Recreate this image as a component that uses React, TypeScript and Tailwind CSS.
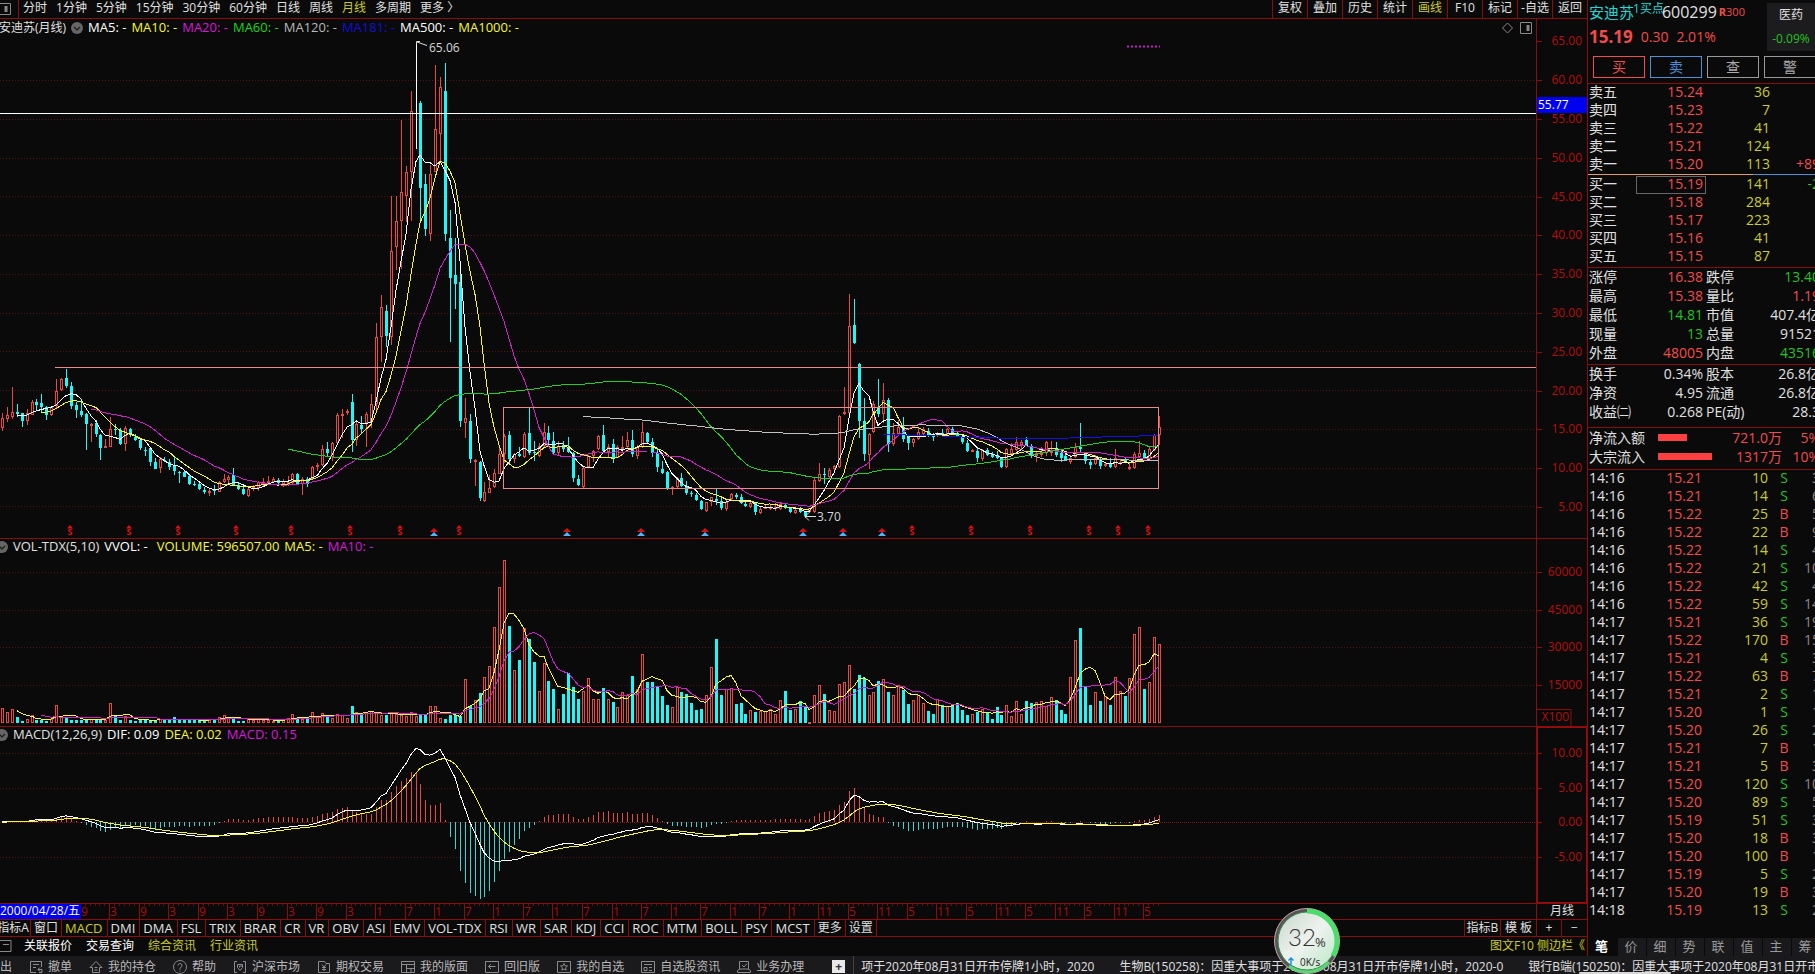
import type { ReactNode } from 'react'
import { clsx } from 'clsx'

const STEP = 4.9234
const UP = '#e84a42'
const DOWN = '#1afafa'

// kind, then high / body top / body bottom / low as chart rows
const CANDLES = `
r413,418,428,431 r407,415,419,422 r387,412,417,419 c404,412,414,417 c413,413,421,427 r409,413,421,425 r400,402,415,415 c399,402,405,410
c394,403,407,412 c406,407,415,420 r406,407,415,416 r379,391,406,408 r378,379,390,391 c369,378,386,388 c382,386,406,409 c402,405,410,418
c400,411,415,417 c413,414,424,450 r423,424,425,442 c420,423,434,437 c434,435,448,460 r439,446,448,448 r417,429,447,447 c424,429,430,435
c428,430,444,445 r426,428,444,451 c428,429,435,437 c434,437,440,441 c439,440,448,450 c447,450,451,456 c447,448,462,466 c458,462,469,469
r457,459,468,473 c457,460,461,462 c459,462,467,470 c457,466,471,475 c471,472,473,483 c470,472,477,477 c475,476,484,485 c481,484,485,486
c483,484,489,490 c487,490,492,494 r489,491,493,496 c485,490,491,495 r481,482,492,492 r474,479,482,483 r475,477,480,483 c468,475,485,486
c483,485,489,490 c487,489,494,495 r487,489,496,497 r485,487,488,491 r481,482,488,491 r478,482,483,486 r476,481,482,483 r477,479,482,482
c478,480,483,485 r479,481,484,487 r476,482,484,486 r473,474,483,484 c473,474,484,485 r477,479,484,495 c477,479,484,487 r466,467,479,480
r463,465,467,471 r445,449,465,466 c442,449,453,456 r442,443,457,461 r413,415,443,445 r409,414,415,438 r409,411,413,415 c394,402,440,452
r422,424,440,446 c416,425,429,434 r412,414,423,447 r394,404,422,428 r323,337,404,412 r295,307,337,362 c305,311,336,347 r196,251,337,345
r196,221,247,270 r120,192,221,269 r166,172,196,222 r91,111,172,221 w42,111,112,149 c101,103,188,221 c174,184,229,236 r165,174,234,241
r65,129,172,172 r77,87,134,163 c63,91,234,241 c210,238,278,342 c238,275,284,309 c268,282,421,427 r398,418,423,438 c414,421,459,463
r459,460,462,486 c461,462,498,501 r482,492,501,502 r475,488,493,493 r469,473,487,488 r448,454,474,474 r434,436,454,463 c431,435,459,464
r453,454,459,463 c447,454,456,457 r432,434,457,458 c408,433,453,455 c441,452,453,461 r443,446,456,457 r423,432,446,447 c426,433,440,445
c432,441,453,454 r441,446,453,455 c441,445,449,452 c437,447,452,453 c452,453,478,482 c475,479,485,486 r467,468,487,488 r455,456,467,468
r450,451,456,462 r435,436,449,450 c425,435,451,453 r444,447,452,458 c439,444,459,463 r445,447,458,458 r436,447,449,452 r432,440,447,448
c430,440,454,457 r445,447,456,459 r422,432,447,448 c432,433,442,443 c438,442,453,457 c449,453,467,472 c461,469,473,474 c471,472,488,490
r486,487,488,495 r477,478,487,488 c473,478,486,487 c481,487,493,495 c491,493,494,497 c493,495,500,501 c500,501,509,510 r502,502,511,512
r497,497,502,506 c489,499,501,505 c497,501,508,510 r499,502,509,511 r493,494,499,500 c493,495,497,499 c494,497,503,504 c502,504,506,507
r502,503,507,508 c502,503,512,515 r507,509,513,514 r504,507,508,509 r504,507,508,510 r503,507,509,511 r503,504,509,510 c503,505,508,509
c507,508,512,513 r508,510,513,514 c507,509,512,513 c511,512,516,518 r508,508,512,513 r477,480,512,513 r463,474,481,482 c468,474,475,484
r468,470,477,479 r465,466,469,471 r415,416,467,468 r387,412,414,415 r294,326,413,414 c299,325,343,344 c363,364,421,438 c398,421,454,461
r433,434,455,469 r401,404,432,433 c379,408,414,417 r383,400,414,423 c398,400,444,452 r423,433,444,446 r420,427,434,435 c417,427,439,442
c435,437,443,450 r438,439,443,447 r428,432,439,440 r427,429,434,435 c428,431,436,437 c433,435,437,441 r432,433,436,437 c429,433,435,436
r428,429,434,435 c427,429,433,434 c432,433,436,437 c435,437,442,444 c440,443,451,452 r449,450,451,452 c448,451,458,462 r449,450,459,461
c448,450,455,456 c452,454,457,458 c451,455,458,459 c457,458,467,468 r448,449,467,468 r443,449,454,455 r437,442,450,451 r440,442,445,450
c437,440,445,446 c444,446,456,458 r452,453,456,462 r447,452,455,457 r441,442,453,456 r441,450,453,456 c442,448,455,457 c450,453,458,462
c454,456,460,461 r455,458,462,464 r443,447,457,458 c423,447,449,452 c452,453,461,464 c460,462,465,469 r455,458,464,465 c457,460,466,469
r462,464,466,467 c458,464,467,468 r449,458,467,468 r459,462,464,465 c457,460,462,463 r463,467,469,470 r452,454,468,469 r441,453,457,458
c450,453,458,459 r447,449,459,460 r434,435,450,451 r416,427,435,445`
  .trim()
  .split(/\s+/)
  .map((s) => {
    const [high, top, bottom, low] = s.slice(1).split(',').map(Number)
    return { kind: s[0], high, top, bottom, low, close: s[0] === 'c' ? bottom : top }
  })

const VOLUMES = [
  15, 11, 14, 6, 2, 4, 8, 3, 3, 2, 4, 18, 7, 5, 3, 3, 3, 4, 4, 3, 4, 3, 20, 8, 3, 7, 3, 2, 3, 3, 3, 3, 4, 3, 3, 6, 3, 3, 3, 3,
  3, 3, 3, 4, 6, 8, 6, 5, 2, 2, 5, 3, 4, 3, 3, 2, 2, 4, 5, 9, 5, 4, 5, 11, 6, 10, 8, 5, 9, 8, 5, 17, 11, 8, 11, 12, 11, 8, 8, 10,
  9, 8, 7, 11, 7, 8, 8, 17, 17, 5, 4, 8, 8, 7, 44, 17, 23, 30, 46, 57, 96, 136, 163, 97, 53, 63, 95, 84, 61, 32, 60, 42, 34, 14, 29, 50, 36, 24, 32, 45,
  24, 24, 35, 24, 21, 16, 31, 28, 47, 34, 69, 41, 41, 36, 27, 18, 16, 36, 31, 29, 20, 13, 14, 28, 56, 84, 28, 34, 35, 19, 20, 9, 13, 11, 12, 12, 14, 9, 23, 32,
  13, 14, 22, 16, 1, 28, 38, 29, 13, 12, 39, 41, 58, 34, 48, 45, 28, 31, 42, 44, 31, 28, 38, 33, 19, 23, 28, 20, 12, 9, 24, 18, 17, 18, 20, 13, 8, 9, 11, 14,
  11, 4, 16, 8, 18, 7, 22, 9, 22, 20, 21, 22, 17, 26, 23, 13, 9, 46, 83, 95, 36, 18, 31, 22, 27, 18, 46, 32, 27, 45, 89, 96, 34, 41, 86, 79,
]

const xAt = (i: number) => Math.round(2 + STEP * i)

// one more candle sits just left of the visible range
function average(visible: number[], n: number) {
  const values = [visible[0], ...visible]
  const points: [number, number][] = []
  for (let i = n - 1; i < values.length; i++) {
    let sum = 0
    for (let j = i - n + 1; j <= i; j++) sum += values[j]
    points.push([xAt(i - 1), sum / n])
  }
  return points
}

function ema(values: number[], n: number) {
  const out = [values[0]]
  for (let i = 1; i < values.length; i++) out.push((out[i - 1] * (n - 1) + values[i] * 2) / (n + 1))
  return out
}

const CLOSES = CANDLES.map((c) => c.close)
const PRICES = CLOSES.map((y) => 60 - (y - 80.2) / 7.766)
const FAST = ema(PRICES, 12)
const SLOW = ema(PRICES, 26)
const DIF = FAST.map((v, i) => v - SLOW[i])
const DEA = ema(DIF, 9)

const toPoints = (points: [number, number][]) => points.map(([x, y]) => `${x},${y.toFixed(1)}`).join(' ')

function Line({ points, color }: { points: [number, number][]; color: string }) {
  return <polyline points={toPoints(points)} fill="none" stroke={color} strokeWidth={1} shapeRendering="crispEdges" />
}

function Grid({ rows }: { rows: number[] }) {
  return (
    <>
      {rows.map((y) => (
        <line key={y} x1={0} x2="100%" y1={y + 0.5} y2={y + 0.5} stroke="#521414" strokeDasharray="1 2" />
      ))}
    </>
  )
}

const DIVIDENDS = [70, 129, 178, 236, 291, 350, 400, 459, 912, 971, 1030, 1089, 1118, 1148]
const EVENTS = [434, 567, 641, 705, 803, 843, 882]

function PriceChart() {
  return (
    <svg className="block w-full h-[500px]" aria-label="月线">
      <g transform="translate(0 -38)">
        <Grid rows={[80, 119, 158, 196, 235, 274, 313, 351, 390, 429, 468, 506]} />
        <line x1={1127} x2={1160} y1={46.5} y2={46.5} stroke="#c020c0" strokeWidth={2} strokeDasharray="2 2" />
        <g shapeRendering="crispEdges">
          {CANDLES.map((c, i) => {
            const x = xAt(i)
            if (c.kind === 'w') return <rect key={i} x={x} y={c.high} width={1} height={c.low - c.high} fill="#fff" />
            if (c.kind === 'c')
              return (
                <g key={i} fill={DOWN}>
                  <rect x={x} y={c.high} width={1} height={c.low - c.high} />
                  <rect x={x - 1} y={c.top} width={3} height={Math.max(c.bottom - c.top, 1)} />
                </g>
              )
            return (
              <g key={i} stroke={UP} fill="none">
                <path d={`M${x + 0.5} ${c.high}V${c.top}M${x + 0.5} ${c.bottom}V${c.low}`} />
                <rect x={x - 0.5} y={c.top + 0.5} width={2} height={Math.max(c.bottom - c.top - 1, 1)} />
              </g>
            )
          })}
        </g>
        <Line points={average(CLOSES, 5)} color="#ffffff" />
        <Line points={average(CLOSES, 10)} color="#f8f828" />
        <Line points={average(CLOSES, 20)} color="#d020d0" />
        <Line points={average(CLOSES, 60)} color="#20d020" />
        <Line points={average(CLOSES, 120)} color="#c0c0c0" />
        <Line points={average(CLOSES, 181)} color="#1414e0" />
        <g stroke="#f08888" fill="none">
          <line x1={55} x2="100%" y1={367.5} y2={367.5} />
          <rect x={503.5} y={407.5} width={655} height={81} />
        </g>
        <line x1={0} x2="100%" y1={113.5} y2={113.5} stroke="#fff" />
        <path d="M427 45.5L417 42M420 41.5H416.5V45" stroke="#ddd" fill="none" />
        <path d="M816 516.5H805M809 512.5L805 516.5L809 520.5" stroke="#ddd" fill="none" />
        <g fill="#d8d8d8" fontSize={12}>
          <text x={429} y={52}>65.06</text>
          <text x={817} y={521}>3.70</text>
        </g>
        {DIVIDENDS.map((x) => (
          <g key={x} fill="#e01010">
            <path d={`M${x} 525l3 3.500h-6z`} />
            <text x={x} y={535} fontSize={9} fontWeight={700} textAnchor="middle">S</text>
          </g>
        ))}
        {EVENTS.map((x) => (
          <g key={x}>
            <path d={`M${x} 528l4 4h-8z`} fill="#e01010" />
            <path d={`M${x} 532l4 4h-8z`} fill="#50b4ff" />
          </g>
        ))}
      </g>
    </svg>
  )
}

function VolumeChart() {
  const tops = VOLUMES.map((v) => 723 - v)
  return (
    <svg className="block w-full h-[170px]" aria-label="成交量">
      <g transform="translate(0 -556)">
        <Grid rows={[572, 610, 647, 685]} />
        <g shapeRendering="crispEdges">
          {VOLUMES.map((v, i) =>
            CANDLES[i]?.kind === 'c' ? (
              <rect key={i} x={xAt(i) - 1} y={723 - v} width={3} height={v} fill={DOWN} />
            ) : (
              <rect key={i} x={xAt(i) - 0.5} y={723.5 - v} width={2} height={Math.max(v - 1, 1)} fill="none" stroke={UP} />
            ),
          )}
        </g>
        <Line points={average(tops, 5)} color="#f8f828" />
        <Line points={average(tops, 10)} color="#d020d0" />
      </g>
    </svg>
  )
}

function MacdChart() {
  const row = (v: number) => 822 - v * 6.9
  return (
    <svg className="block w-full h-[159px]" aria-label="MACD">
      <g transform="translate(0 -744)">
        <Grid rows={[753, 788, 857]} />
        <line x1={0} x2="100%" y1={822.5} y2={822.5} stroke="#7a1616" strokeDasharray="1 1" />
        <g shapeRendering="crispEdges">
          {DIF.map((v, i) => {
            const h = (v - DEA[i]) * 2 * 6.9
            return (
              <rect key={i} x={xAt(i)} y={h > 0 ? 822 - h : 822} width={1} height={Math.abs(h)} fill={h > 0 ? UP : '#30d8d8'} />
            )
          })}
        </g>
        <Line points={DIF.map((v, i) => [xAt(i), row(v)])} color="#ffffff" />
        <Line points={DEA.map((v, i) => [xAt(i), row(v)])} color="#f8f828" />
      </g>
    </svg>
  )
}

function Scale({ labels, origin, children }: { labels: [string, number][]; origin: number; children?: ReactNode }) {
  return (
    <svg className="block size-full">
      <g transform={`translate(0 ${-origin})`} fill="#b80c0c" fontSize={12} textAnchor="end">
        {labels.map(([label, y]) => (
          <g key={label}>
            <line x1={0} x2={5} y1={y + 0.5} y2={y + 0.5} stroke="#8a0c0c" />
            <text x={45} y={y + 4}>{label}</text>
          </g>
        ))}
        {children}
      </g>
    </svg>
  )
}

const PRICE_LABELS = Array.from({ length: 13 }, (_, i): [string, number] => [`${65 - i * 5}.00`, Math.round(41.4 + i * 38.8)])

function Collapse() {
  return (
    <svg className="size-3 shrink-0" viewBox="0 0 12 12">
      <circle cx={6} cy={6} r={6} fill="#666" />
      <path d="M3 5l3 3 3-3" stroke="#222" strokeWidth={1.5} fill="none" />
    </svg>
  )
}

function Panel({ legend, chart, scale, className }: { legend: ReactNode; chart: ReactNode; scale: ReactNode; className: string }) {
  return (
    <section className="flex border-b border-[#8a0c0c]">
      <div className="flex-1 min-w-0">
        <div className={clsx('flex items-center gap-[5px] pb-0.5 text-[13px] whitespace-nowrap', className)}>{legend}</div>
        {chart}
      </div>
      <div className="w-[51px] shrink-0 border-l border-[#8a0c0c]">{scale}</div>
    </section>
  )
}

const PERIODS = ['分时', '1分钟', '5分钟', '15分钟', '30分钟', '60分钟', '日线', '周线', '月线', '多周期', '更多 〉']
const TOOLS = ['复权', '叠加', '历史', '统计', '画线', 'F10', '标记', '-自选', '返回']

function TopBar() {
  return (
    <header className="flex h-[19px] border-b border-[#8a0c0c] whitespace-nowrap">
      <div className="w-[19px] border-r border-[#8a0c0c] flex items-center">
        <svg className="size-3" viewBox="0 0 12 12" fill="none" stroke="#888">
          <path d="M0 .5h10.500v11H0" />
          <path d="M6 3v6" strokeWidth={3} />
        </svg>
      </div>
      <nav className="flex-1 flex items-center gap-[9px] pl-1 pb-0.5">
        {PERIODS.map((p) => (
          <button key={p} className={p === '月线' ? 'text-[#cccc22]' : ''}>{p}</button>
        ))}
      </nav>
      {TOOLS.map((t) => (
        <button key={t} className={clsx('w-[35px] pb-0.5 border-l border-[#8a0c0c]', t === '画线' && 'text-[#cccc22]')}>{t}</button>
      ))}
    </header>
  )
}

const DATE_LABELS = ['9', '3', '9', '3', '9', '3', '9', '3', '9', '3', '1', '7', '1', '7', '1', '7', '1', '7', '1', '7', '1', '7', '1', '7', '1', '11', '5', '11', '5', '11', '5', '11', '5', '11', '5', '11', '5']

function DateAxis() {
  return (
    <div className="flex h-4 border-b border-[#8a0c0c] leading-[14px]">
      <div className="w-[81px] shrink-0 bg-[#0000f0] text-white whitespace-nowrap overflow-hidden">2000/04/28/五</div>
      <svg className="flex-1 min-w-0 h-full">
        <g transform="translate(-81 0)">
          {CANDLES.map((_, i) => (
            <line key={i} x1={Math.round(i * STEP) + 1.5} x2={Math.round(i * STEP) + 1.5} y1={0} y2={2} stroke="#6a0c0c" />
          ))}
          {DATE_LABELS.map((label, k) => {
            const x = Math.round((16 + k * 6) * STEP) + 1
            return (
              <g key={k}>
                <line x1={x + 0.5} x2={x + 0.5} y1={0} y2={15} stroke="#8a0c0c" />
                <text x={x + 1} y={12} fontSize={12} fill="#a80c0c">{label}</text>
              </g>
            )
          })}
        </g>
      </svg>
      <div className="w-[51px] shrink-0 border-l border-[#8a0c0c] text-center">月线</div>
    </div>
  )
}

const INDICATORS = ['MACD', 'DMI', 'DMA', 'FSL', 'TRIX', 'BRAR', 'CR', 'VR', 'OBV', 'ASI', 'EMV', 'VOL-TDX', 'RSI', 'WR', 'SAR', 'KDJ', 'CCI', 'ROC', 'MTM', 'BOLL', 'PSY', 'MCST']

function IndicatorTabs() {
  return (
    <div className="flex h-[17px] border-b border-[#8a0c0c] whitespace-nowrap leading-4">
      <button className="w-[31px] border-r border-[#8a0c0c]"><span className="-ml-1">指标A</span></button>
      <button className="px-[3px] border-r border-[#8a0c0c]">窗口</button>
      {INDICATORS.map((name) => (
        <button key={name} className={clsx('pl-[3px] pr-1 text-[13px] border-r border-[#8a0c0c]', name === 'MACD' && 'text-[#cccc22]')}>{name}</button>
      ))}
      <button className="px-[3px] border-r border-[#8a0c0c]">更多</button>
      <button className="px-[3px] border-r border-[#8a0c0c]">设置</button>
      <button className="ml-auto w-9 border-l border-[#8a0c0c]">指标B</button>
      <button className="w-9 border-l border-[#8a0c0c]">模 板</button>
      <button className="w-[25px] border-l border-[#8a0c0c]">+</button>
      <button className="w-[26px] border-l border-[#8a0c0c]">−</button>
    </div>
  )
}

const ASKS = [['卖五', '15.24', '36', ''], ['卖四', '15.23', '7', ''], ['卖三', '15.22', '41', ''], ['卖二', '15.21', '124', ''], ['卖一', '15.20', '113', '+89']]
const BIDS = [['买一', '15.19', '141', '-2'], ['买二', '15.18', '284', ''], ['买三', '15.17', '223', ''], ['买四', '15.16', '41', ''], ['买五', '15.15', '87', '']]

const RED = 'text-[#f34a4a]'
const GREEN = 'text-[#22c322]'
const YELLOW = 'text-[#cccc22]'
const TABLE = 'w-[232px] table-fixed text-right whitespace-nowrap [&_td]:pb-0.5'

function Book({ rows }: { rows: string[][] }) {
  return (
    <table className={TABLE}>
      <colgroup>
        <col className="w-[48px]" />
        <col className="w-[70px]" />
        <col className="w-[64px]" />
        <col />
      </colgroup>
      <tbody>
        {rows.map(([label, price, volume, change]) => (
          <tr key={label} className="h-[18px]">
            <td className="pl-px text-left">{label}</td>
            <td className={clsx('pr-[3px]', RED, label === '买一' && 'outline outline-[#666] -outline-offset-1')}>{price}</td>
            <td className={YELLOW}>{volume}</td>
            <td className={change[0] === '-' ? GREEN : RED}>{change}</td>
          </tr>
        ))}
      </tbody>
    </table>
  )
}

const STATS = [
  ['涨停', '16.38', RED, '跌停', '13.40', GREEN],
  ['最高', '15.38', RED, '量比', '1.19', RED],
  ['最低', '14.81', GREEN, '市值', '407.4亿', ''],
  ['现量', '13', GREEN, '总量', '91521', ''],
  ['外盘', '48005', RED, '内盘', '43516', GREEN],
]
const RATIOS = [
  ['换手', '0.34%', '', '股本', '26.8亿', ''],
  ['净资', '4.95', '', '流通', '26.8亿', ''],
  ['收益㈡', '0.268', '', 'PE(动)', '28.3', ''],
]

function Stats({ rows }: { rows: string[][] }) {
  return (
    <table className={TABLE}>
      <colgroup>
        <col className="w-[48px]" />
        <col className="w-[67px]" />
        <col className="w-[50px]" />
        <col />
      </colgroup>
      <tbody>
        {rows.map(([a, av, ac, b, bv, bc]) => (
          <tr key={a} className="h-[19px]">
            <td className="pl-px text-left">{a}</td>
            <td className={ac}>{av}</td>
            <td className="pl-[3px] text-left">{b}</td>
            <td className={bc}>{bv}</td>
          </tr>
        ))}
      </tbody>
    </table>
  )
}

const TICKS = `
14:16 15.21 10 S 3|14:16 15.21 14 S 6|14:16 15.22 25 B 5|14:16 15.22 22 B 9|14:16 15.22 14 S 4|14:16 15.22 21 S 10
14:16 15.22 42 S 4|14:16 15.22 59 S 14|14:17 15.21 36 S 19|14:17 15.22 170 B 15|14:17 15.21 4 S 3|14:17 15.22 63 B 7
14:17 15.21 2 S 1|14:17 15.20 1 S 1|14:17 15.20 26 S 2|14:17 15.21 7 B 1|14:17 15.21 5 B 3|14:17 15.20 120 S 10
14:17 15.20 89 S 5|14:17 15.19 51 S 3|14:17 15.20 18 B 3|14:17 15.20 100 B 1|14:17 15.19 5 S 2|14:17 15.20 19 B 3
14:18 15.19 13 S 2`
  .trim()
  .split(/[|\n]/)
  .map((s) => s.split(' '))

function Ticks() {
  return (
    <table className={TABLE}>
      <colgroup>
        <col className="w-[48px]" />
        <col className="w-[66px]" />
        <col className="w-[66px]" />
        <col className="w-[32px]" />
        <col />
      </colgroup>
      <tbody>
        {TICKS.map(([time, price, volume, side, count], i) => (
          <tr key={i} className="h-[18px]">
            <td className="pl-px text-left">{time}</td>
            <td className={RED}>{price}</td>
            <td className={YELLOW}>{volume}</td>
            <td className={clsx('text-center', side === 'S' ? GREEN : RED)}>{side}</td>
            <td className="text-[#888]">{count}</td>
          </tr>
        ))}
      </tbody>
    </table>
  )
}

const FLOWS = [
  { label: '净流入额', bar: 'w-[29px]', value: '721.0万', share: '5%' },
  { label: '大宗流入', bar: 'w-[54px]', value: '1317万', share: '10%' },
]
const SIDE_TABS = ['笔', '价', '细', '势', '联', '值', '主', '筹']

function Quote() {
  return (
    <aside className="w-[228px] shrink-0 overflow-hidden border-l border-[#8a0c0c] text-sm leading-4 flex flex-col">
      <div className="h-[83px] relative">
        <div className="flex h-6 items-center pl-px whitespace-nowrap">
          <span className="text-[15px] text-[#20d8d8]">安迪苏</span>
          <span className="text-xs text-[#20d8d8] self-start leading-[18px] -ml-px">1买点</span>
          <span className="text-base -ml-0.5">600299</span>
          <span className={clsx('text-[11px] ml-0.5', RED)}><b>R</b>300</span>
        </div>
        <div className={clsx('flex h-[25px] items-center gap-2 pl-px', RED)}>
          <b className="text-[17px]">15.19</b>
          <span>0.30</span>
          <span>2.01%</span>
        </div>
        <div className="flex gap-[5px] pl-[5px] pt-[7px]">
          <button className={clsx('w-[52px] h-[22px] shrink-0 border border-[#f34a4a]', RED)}>买</button>
          <button className="w-[52px] h-[22px] shrink-0 border border-[#4a90d9] text-[#4a90d9]">卖</button>
          <button className="w-[52px] h-[22px] shrink-0 border border-[#999] text-[#aaa]">查</button>
          <button className="w-[52px] h-[22px] shrink-0 border border-[#999] text-[#aaa]">警</button>
        </div>
        <div className="absolute top-[3px] right-0 w-[48px] h-12 bg-[#1c1c1e] text-xs leading-6 text-center">
          <div>医药</div>
          <div className={GREEN}>-0.09%</div>
        </div>
      </div>
      <div className="border-t border-[#8a0c0c]">
        <Book rows={ASKS} />
      </div>
      <div className="flex h-px">
        <div className="w-[165px] bg-[#e0a050]" />
        <div className="flex-1 bg-[#4a90d9]" />
      </div>
      <div className="pt-px pb-px">
        <Book rows={BIDS} />
      </div>
      <div className="border-t border-[#8a0c0c] pb-px">
        <Stats rows={STATS} />
      </div>
      <div className="border-t border-[#8a0c0c] pb-[5px]">
        <Stats rows={RATIOS} />
      </div>
      <div className="border-t border-[#8a0c0c] pb-[3px]">
        {FLOWS.map((f) => (
          <div key={f.label} className="flex items-center h-[19px] w-[232px] pl-px whitespace-nowrap">
            <span className="w-[69px]">{f.label}</span>
            <span className="w-[54px]"><span className={clsx('block h-[7px] bg-[#fa4040]', f.bar)} /></span>
            <span className={clsx('flex-1 text-right', RED)}>{f.value}</span>
            <span className={clsx('w-[38px] text-right', RED)}>{f.share}</span>
          </div>
        ))}
      </div>
      <div className="border-t border-[#8a0c0c]">
        <Ticks />
      </div>
      <div className="mt-auto flex h-[18px] text-[13px] text-[#999]">
        {SIDE_TABS.map((t) => (
          <button key={t} className={clsx('w-[29px] shrink-0 pr-0.5 pb-0.5', t === '笔' ? 'text-white font-bold' : 'bg-[#1a1a1c] border-l border-[#0a0a0a]')}>{t}</button>
        ))}
      </div>
    </aside>
  )
}

const SHORTCUTS = [
  { label: '撤单', d: 'M12.500 7V1.500h-11v11H7M4 4.500h6M4 7.500h3M9 9.500h4M9 9.500l2-2M9 9.500l2 2M13 9.500v3h-3' },
  { label: '我的持仓', d: 'M1 7.500L7 1.500l6 6H10.500v5h-7v-5zM5.500 7.500h3M5.500 10h3' },
  { label: '帮助', d: 'M7 .5a6.500 6.500 0 1 0 .01 0M5 5.500a2 2 0 1 1 2.500 2L7 8v1.500M7 10.500v1' },
  { label: '沪深市场', d: 'M4 1.500H1.500v11H4M10 1.500h2.500v11H10M4.500 4.500h5v3L7 10.500l-2.500-3zM9 6H6.500v1.500' },
  { label: '期权交易', d: 'M5 1.500H1.500v11h11v-9H9L7.500 1.500zM5 4.500l2 2.500 2-2.500M7 7v4M5 7.500h4M5 9.500h4' },
  { label: '我的版面', d: 'M.5 1.500h13v11H.5zM.5 4.500h13M5.500 4.500v8M5.500 8.500h8M10 8.500v4' },
  { label: '回旧版', d: 'M.5 1.500h13v11H.5zM3.500 6.500h7M6 4L3.500 6.500L6 9' },
  { label: '我的自选', d: 'M.5 1.500h13v11H.5zM7 3.500l1 2.300 2.500.2-1.900 1.700.6 2.500L7 9l-2.200 1.200.6-2.500L3.500 6l2.500-.2z' },
  { label: '自选股资讯', d: 'M.5 1.500h13v11H.5zM3 4.500h8M3 7.500h3v3H3zM8 7.500h3M8 10.500h3' },
  { label: '业务办理', d: 'M2.500 9V1.500h9V9M5 5l2 2 3-3.500M.5 12.500v-2L3 9h8l2.500 1.500v2z' },
]

function BottomBar() {
  return (
    <footer className="relative flex items-start h-[18px] bg-[#1a1a1c] overflow-hidden whitespace-nowrap leading-[22px]">
      <div className="flex shrink-0 items-center gap-[17px] text-[#b8b8b8]">
        <span>出</span>
        {SHORTCUTS.map((s) => (
          <button key={s.label} className="flex items-center gap-[5px]">
            <svg className="size-3.5" viewBox="0 0 14 14" fill="none" stroke="#8c8c8c">
              <path d={s.d} />
            </svg>
            {s.label}
          </button>
        ))}
      </div>
      <button className="ml-7 mt-1 shrink-0 size-[13px] bg-[#e8e8e8] text-[#333] leading-3 font-bold">+</button>
      <div className="ml-2 flex gap-[25px] border-l border-[#444] pl-[7px] text-[#e0e0e0]">
        <span>项于2020年08月31日开市停牌1小时，2020</span>
        <span>生物B(150258)：因重大事项于2020年08月31日开市停牌1小时，2020-0</span>
        <span>银行B端(150250)：因重大事项于2020年08月31日开市停牌1小时</span>
      </div>
      <div className="absolute right-36 bottom-0 w-[92px] h-[2px] rounded bg-[#d8d8d8]" />
    </footer>
  )
}

function NetBall() {
  return (
    <div className="absolute bottom-0 right-[475px] size-[66px]">
      <svg className="block size-full" viewBox="0 0 66 66">
        <defs>
          <linearGradient id="ball" x1="0" y1="0" x2="1" y2="1">
            <stop offset="0" stopColor="#c8d8cc" />
            <stop offset="0.5" stopColor="#eef2ee" />
            <stop offset="1" stopColor="#b8e8c4" />
          </linearGradient>
        </defs>
        <circle cx={33} cy={33} r={32.500} fill="#555" stroke="#c8a8a8" />
        <circle cx={33} cy={33} r={29} fill="url(#ball)" stroke="#3a8a50" />
        <path d="M33 3a30 30 0 0 1 26 45" fill="none" stroke="#4cdc6c" strokeWidth={5} />
        <path d="M55 54a30 30 0 0 1-40 4" fill="none" stroke="#58d874" strokeWidth={3} />
        <text x={14} y={38} fontFamily="Lato" fontSize={24} fontWeight={300} fill="#333">32</text>
        <text x={41} y={39} fontSize={13} fill="#333">%</text>
        <path d="M17 58v-8M14.500 52.500L17 50l2.500 2.500" fill="none" stroke="#2090f0" strokeWidth={1.500} />
        <text x={26} y={58} fontSize={10} fill="#222">0K/s</text>
      </svg>
    </div>
  )
}

export default function App() {
  return (
    <div className="relative min-h-screen overflow-hidden bg-[#0a0a0a] text-[#e0e0e0] text-xs font-['Open_Sans','Noto_Sans_CJK_SC',sans-serif]">
      <div className="flex">
        <main className="flex-1 min-w-0">
          <TopBar />
          <Panel
            className="h-[19px]"
            legend={
              <>
                <span className="-ml-px text-xs">安迪苏(月线)</span>
                <Collapse />
                <span className="text-white">MA5: -</span>
                <span className="text-[#f8f828]">MA10: -</span>
                <span className="text-[#d818d8]">MA20: -</span>
                <span className="text-[#18d818]">MA60: -</span>
                <span className="text-[#b8b8b8]">MA120: -</span>
                <span className="text-[#1010d8]">MA181: -</span>
                <span className="text-white">MA500: -</span>
                <span className="text-[#f8f828]">MA1000: -</span>
                <svg className="ml-auto mr-1 h-3 w-[30px]" viewBox="0 0 30 12" fill="none" stroke="#888">
                  <path d="M5.500 1L10.500 6l-5 5L.5 6zM18.500.5h11v11h-11z" />
                  <path d="M26 3v6" strokeWidth={3} />
                </svg>
              </>
            }
            chart={<PriceChart />}
            scale={
              <Scale labels={PRICE_LABELS} origin={19}>
                <rect x={0} y={97} width={50} height={16} fill="#0000f0" />
                <text x={1} y={109} fill="#fff" textAnchor="start">55.77</text>
              </Scale>
            }
          />
          <Panel
            className="h-[17px]"
            legend={
              <>
                <span className="-ml-1 flex"><Collapse /></span>
                <span>VOL-TDX(5,10)</span>
                <span className="text-white">VVOL: -</span>
                <span className="text-[#f8f828] ml-1">VOLUME: 596507.00</span>
                <span className="text-[#f8f828]">MA5: -</span>
                <span className="text-[#d818d8]">MA10: -</span>
              </>
            }
            chart={<VolumeChart />}
            scale={
              <Scale labels={[['60000', 572], ['45000', 610], ['30000', 647], ['15000', 685]]} origin={539}>
                <rect x={-1} y={709.5} width={35} height={18} fill="none" stroke="#8a0c0c" />
                <text x={32} y={721}>X100</text>
              </Scale>
            }
          />
          <Panel
            className="h-[17px]"
            legend={
              <>
                <span className="-ml-1 flex"><Collapse /></span>
                <span>MACD(12,26,9)</span>
                <span className="text-white">DIF: 0.09</span>
                <span className="text-[#f8f828]">DEA: 0.02</span>
                <span className="text-[#d818d8]">MACD: 0.15</span>
              </>
            }
            chart={<MacdChart />}
            scale={
              <Scale labels={[['10.00', 753], ['5.00', 788], ['0.00', 822], ['-5.00', 857]]} origin={727}>
                <rect x={0.5} y={727.5} width={49} height={175} fill="none" stroke="#9a0c0c" />
              </Scale>
            }
          />
          <DateAxis />
          <IndicatorTabs />
          <nav className="flex items-center h-[19px] pb-0.5 whitespace-nowrap">
            <svg className="size-3" viewBox="0 0 12 12" fill="none" stroke="#888">
              <path d="M0 .5h11v11H0M3 4.500h6" />
            </svg>
            <a href="#quote" className="ml-3 text-white">关联报价</a>
            <a href="#trade" className="ml-[14px] text-white">交易查询</a>
            <a href="#news" className="ml-[14px] text-[#cccc22]">综合资讯</a>
            <a href="#industry" className="ml-[14px] text-[#cccc22]">行业资讯</a>
            <a href="#f10" className="ml-auto mr-0.5 text-[#cccc22]">图文F10 侧边栏《</a>
          </nav>
        </main>
        <Quote />
      </div>
      <BottomBar />
      <NetBall />
    </div>
  )
}
